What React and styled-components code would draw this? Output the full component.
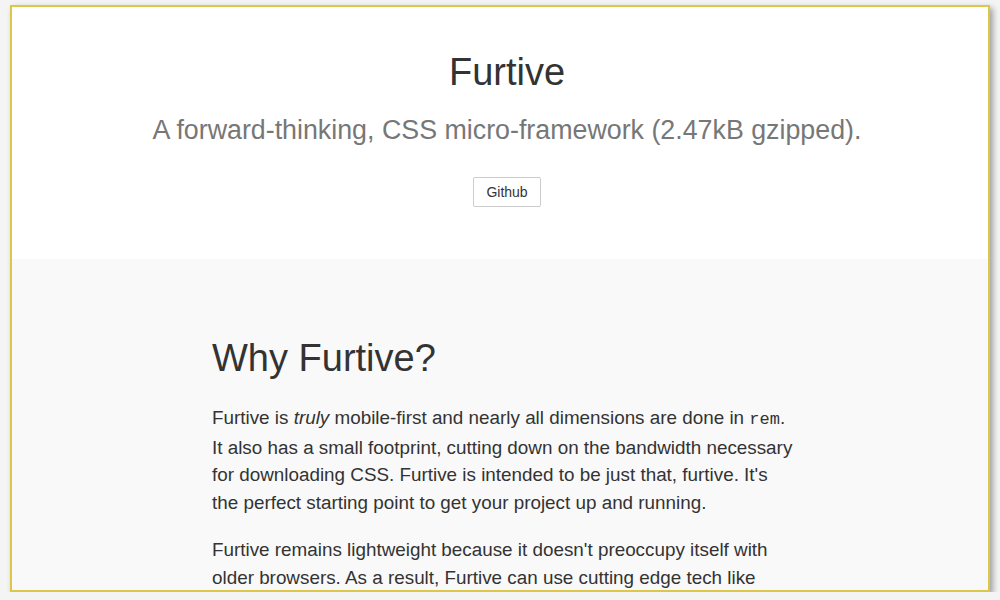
import React from "react"
import styled, { createGlobalStyle } from "styled-components"

const GlobalStyle = createGlobalStyle`
  html, body {
    margin: 0;
    padding: 0;
    background: #f4f4f4;
    font-family: "Liberation Sans", Arial, sans-serif;
    overflow: hidden;
  }
`

const Frame = styled.div`
  box-sizing: border-box;
  margin: 5px 0 0 10px;
  width: 980px;
  height: 587px;
  border: 2px solid #dcc748;
  background: #f9f9f9;
  box-shadow: 3px 3px 6px rgba(0, 0, 0, 0.35);
  overflow: hidden;
`

const Hero = styled.header`
  background: #fff;
  height: 252px;
  box-sizing: border-box;
  padding: 42px 0 0 14px;
  text-align: center;
`

const Title = styled.h1`
  margin: 0;
  font-size: 38px;
  line-height: 46px;
  font-weight: normal;
  color: #333;
`

const Subtitle = styled.p`
  margin: 20px 0 0;
  font-size: 26.8px;
  line-height: 31px;
  color: #777;
`

const Button = styled.a`
  display: inline-block;
  box-sizing: border-box;
  margin-top: 31px;
  width: 68px;
  height: 30px;
  line-height: 28px;
  border: 1px solid #ccc;
  border-radius: 2px;
  background: #fff;
  color: #333;
  font-size: 14px;
  text-decoration: none;
`

const Section = styled.section`
  padding: 76px 0 0 24px;
`

const Container = styled.div`
  width: 600px;
  margin: 0 auto;
`

const Heading = styled.h2`
  margin: 0 0 23px;
  font-size: 38px;
  line-height: 46px;
  font-weight: normal;
  color: #333;
`

const Para = styled.p`
  margin: 0 0 19px;
  font-size: 18.85px;
  line-height: 27.7px;
  color: #333;
`

const Code = styled.code`
  font-family: "Liberation Mono", "Courier New", monospace;
  font-size: 17px;
`

export default function App() {
  return (
    <>
      <GlobalStyle />
      <Frame>
        <Hero>
          <Title>Furtive</Title>
          <Subtitle>A forward-thinking, CSS micro-framework (2.47kB gzipped).</Subtitle>
          <Button href="#">Github</Button>
        </Hero>
        <Section>
          <Container>
            <Heading>Why Furtive?</Heading>
            <Para>
              Furtive is <em>truly</em> mobile-first and nearly all dimensions are done in{" "}
              <Code>rem</Code>.<br />
              It also has a small footprint, cutting down on the bandwidth necessary<br />
              for downloading CSS. Furtive is intended to be just that, furtive. It's<br />
              the perfect starting point to get your project up and running.
            </Para>
            <Para>
              Furtive remains lightweight because it doesn't preoccupy itself with<br />
              older browsers. As a result, Furtive can use cutting edge tech like<br />
              flexbox and other modern features to keep things small.
            </Para>
          </Container>
        </Section>
      </Frame>
    </>
  )
}
